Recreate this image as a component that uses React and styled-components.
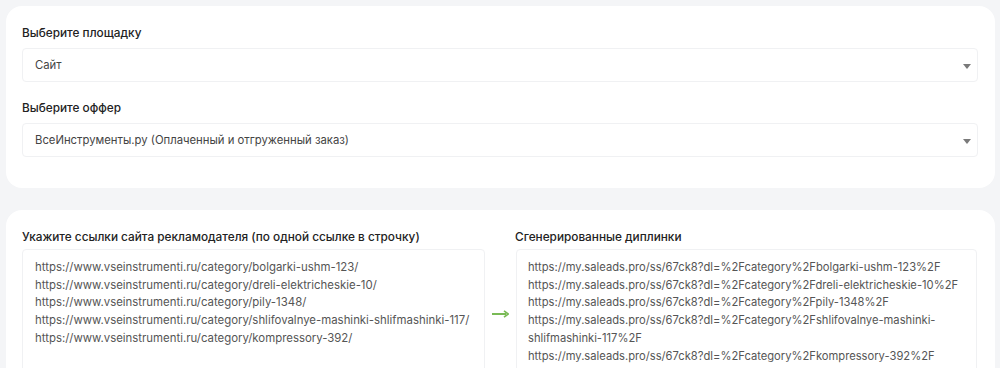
import styled, { createGlobalStyle } from 'styled-components';

const GlobalStyle = createGlobalStyle`
  html, body {
    margin: 0;
    background: #f4f5f7;
    font-family: Inter, "Noto Sans", sans-serif;
    color: #1f1f1f;
  }
  body {
    padding: 6px 5px 0 6px;
  }
`

const Page = styled.div`
  display: flex;
  flex-direction: column;
  gap: 22px;
`

const Card = styled.div`
  background: #fff;
  border-radius: 16px;
  padding: ${p => p.$pad || '20px 17px 31px 16px'};
`

const Field = styled.div`
  display: flex;
  flex-direction: column;
  gap: 8px;
  & + & {
    margin-top: 19px;
  }
`

const Label = styled.label`
  font-size: 11.8px;
  font-weight: 500;
  line-height: 14px;
  color: #222;
`

const Select = styled.div`
  position: relative;
  height: 34px;
  box-sizing: border-box;
  border: 1px solid #f0f1f3;
  border-radius: 4px;
  display: flex;
  align-items: center;
  padding: 0 40px 0 12px;
  font-size: 11.3px;
  color: #444;
  &::after {
    content: '';
    position: absolute;
    right: 6px;
    top: 15px;
    border-left: 4px solid transparent;
    border-right: 4px solid transparent;
    border-top: 5px solid #7a7a7a;
  }
`

const LinksGrid = styled.div`
  display: grid;
  grid-template-columns: 463px 30px 462px;
  align-items: stretch;
`

const Column = styled.div`
  display: flex;
  flex-direction: column;
  gap: 5px;
`

const ArrowCell = styled.div`
  display: flex;
  align-items: center;
  justify-content: center;
  padding-top: 14px;
  color: #79ba55;
`

const Area = styled.textarea`
  box-sizing: border-box;
  height: 134px;
  border: 1px solid #f0f1f3;
  border-radius: 4px;
  padding: ${p => p.$right ? '9px 6px 8px 11px' : '9px 10px 5px 12px'};
  margin-left: ${p => p.$right ? '1px' : '0'};
  font-family: Inter, "Noto Sans", sans-serif;
  font-size: ${p => p.$right ? '11.2px' : '11.4px'};
  line-height: 17.7px;
  color: #555;
  resize: none;
  outline: none;
  overflow: hidden;
  background: #fff;
`

const sourceLinks = [
  'https://www.vseinstrumenti.ru/category/bolgarki-ushm-123/',
  'https://www.vseinstrumenti.ru/category/dreli-elektricheskie-10/',
  'https://www.vseinstrumenti.ru/category/pily-1348/',
  'https://www.vseinstrumenti.ru/category/shlifovalnye-mashinki-shlifmashinki-117/',
  'https://www.vseinstrumenti.ru/category/kompressory-392/',
]

const deeplinks = [
  'https://my.saleads.pro/ss/67ck8?dl=%2Fcategory%2Fbolgarki-ushm-123%2F',
  'https://my.saleads.pro/ss/67ck8?dl=%2Fcategory%2Fdreli-elektricheskie-10%2F',
  'https://my.saleads.pro/ss/67ck8?dl=%2Fcategory%2Fpily-1348%2F',
  'https://my.saleads.pro/ss/67ck8?dl=%2Fcategory%2Fshlifovalnye-mashinki-shlifmashinki-117%2F',
  'https://my.saleads.pro/ss/67ck8?dl=%2Fcategory%2Fkompressory-392%2F',
]

const App = () => {
  return (
    <>
      <GlobalStyle />
      <Page>
        <Card>
          <Field>
            <Label>Выберите площадку</Label>
            <Select>Сайт</Select>
          </Field>
          <Field>
            <Label>Выберите оффер</Label>
            <Select>ВсеИнструменты.ру (Оплаченный и отгруженный заказ)</Select>
          </Field>
        </Card>
        <Card $pad="20px 17px 0 16px">
          <LinksGrid>
            <Column>
              <Label>Укажите ссылки сайта рекламодателя (по одной ссылке в строчку)</Label>
              <Area readOnly value={sourceLinks.join('\n')} />
            </Column>
            <ArrowCell>
              <svg width="17" height="8" viewBox="0 0 17 8" fill="none">
                <path d="M0 4h14" stroke="currentColor" strokeWidth="2" />
                <path d="M12 0.8L16.2 4L12 7.2" stroke="currentColor" strokeWidth="1.6" />
              </svg>
            </ArrowCell>
            <Column>
              <Label>Сгенерированные диплинки</Label>
              <Area $right readOnly value={deeplinks.join('\n')} />
            </Column>
          </LinksGrid>
        </Card>
      </Page>
    </>
  )
}

export default App
